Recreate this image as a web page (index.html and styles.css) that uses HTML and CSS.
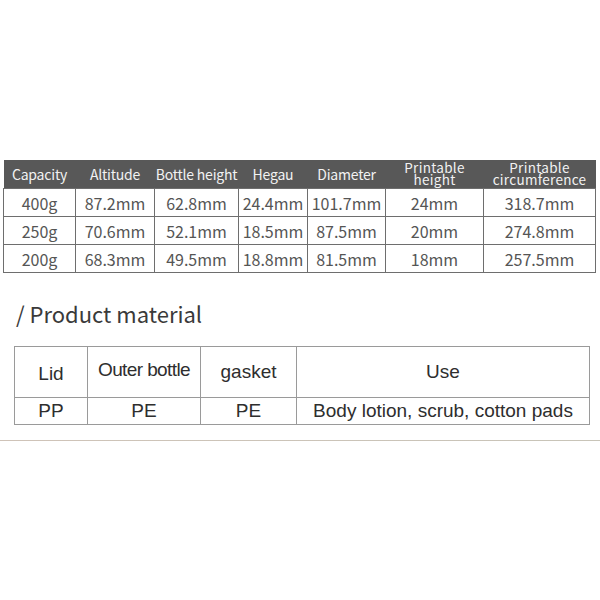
FILE: index.html
```html
<!DOCTYPE html>
<html>
<head>
<meta charset="utf-8">
<link rel="stylesheet" href="styles.css">
</head>
<body>
<div class="page">
  <table class="spec">
    <colgroup>
      <col style="width:72px"><col style="width:79px"><col style="width:84px"><col style="width:69px"><col style="width:78px"><col style="width:98px"><col style="width:112px">
    </colgroup>
    <thead>
      <tr>
        <th>Capacity</th><th>Altitude</th><th>Bottle height</th><th>Hegau</th><th>Diameter</th>
        <th class="two">Printable<br>height</th><th class="two">Printable<br>circumference</th>
      </tr>
    </thead>
    <tbody>
      <tr><td>400g</td><td>87.2mm</td><td>62.8mm</td><td>24.4mm</td><td>101.7mm</td><td>24mm</td><td>318.7mm</td></tr>
      <tr><td>250g</td><td>70.6mm</td><td>52.1mm</td><td>18.5mm</td><td>87.5mm</td><td>20mm</td><td>274.8mm</td></tr>
      <tr><td>200g</td><td>68.3mm</td><td>49.5mm</td><td>18.8mm</td><td>81.5mm</td><td>18mm</td><td>257.5mm</td></tr>
    </tbody>
  </table>

  <h2 class="title">/ Product material</h2>

  <table class="mat">
    <colgroup>
      <col style="width:73px"><col style="width:113px"><col style="width:96px"><col style="width:293px">
    </colgroup>
    <tr class="head"><td class="lid">Lid</td><td class="up">Outer bottle</td><td>gasket</td><td>Use</td></tr>
    <tr class="body"><td>PP</td><td>PE</td><td>PE</td><td>Body lotion, scrub, cotton pads</td></tr>
  </table>

  <div class="rule"></div>
</div>
</body>
</html>
```
FILE: styles.css
```css
html, body {
  margin: 0;
  padding: 0;
  background: #ffffff;
}
.page {
  padding-top: 160px;
  width: 600px;
}
.spec {
  margin-left: 3px;
  width: 592px;
  border-collapse: collapse;
  table-layout: fixed;
  font-family: "Noto Sans CJK SC", "Noto Sans", sans-serif;
}
.spec th {
  background: #585858;
  color: #f2f2f2;
  font-weight: 400;
  font-size: 14px;
  height: 27px;
  padding: 0;
  line-height: 15px;
  white-space: nowrap;
  letter-spacing: -0.2px;
}
.spec th.two {
  font-size: 13.5px;
  line-height: 12px;
  padding-top: 1px;
  vertical-align: top;
  letter-spacing: 0.3px;
}
.spec td {
  border: 1px solid #6e6e6e;
  color: #555555;
  font-size: 16px;
  text-align: center;
  height: 27px;
  padding: 0;
  white-space: nowrap;
}
.title {
  margin: 24px 0 0 16px;
  font-family: "Noto Sans CJK SC", "Noto Sans", sans-serif;
  font-weight: 400;
  font-size: 22px;
  line-height: 32px;
  color: #3a3a3a;
}
.mat {
  margin: 17px 0 0 14px;
  width: 576px;
  border-collapse: collapse;
  table-layout: fixed;
  font-family: "Liberation Sans", Arial, sans-serif;
  color: #2e2e2e;
  font-size: 19px;
}
.mat td {
  border: 1px solid #9a9a9a;
  text-align: center;
  padding: 0;
  white-space: nowrap;
}
.mat .head td {
  height: 46px;
}
.mat .head td.lid {
  padding-top: 4px;
}
.mat .head td.up {
  padding-bottom: 4px;
  letter-spacing: -0.6px;
}
.mat .body td {
  height: 26px;
}
.rule {
  margin-top: 15px;
  height: 1px;
  background: linear-gradient(to right, #cfc3b8, #c8c4b8);
}
```
